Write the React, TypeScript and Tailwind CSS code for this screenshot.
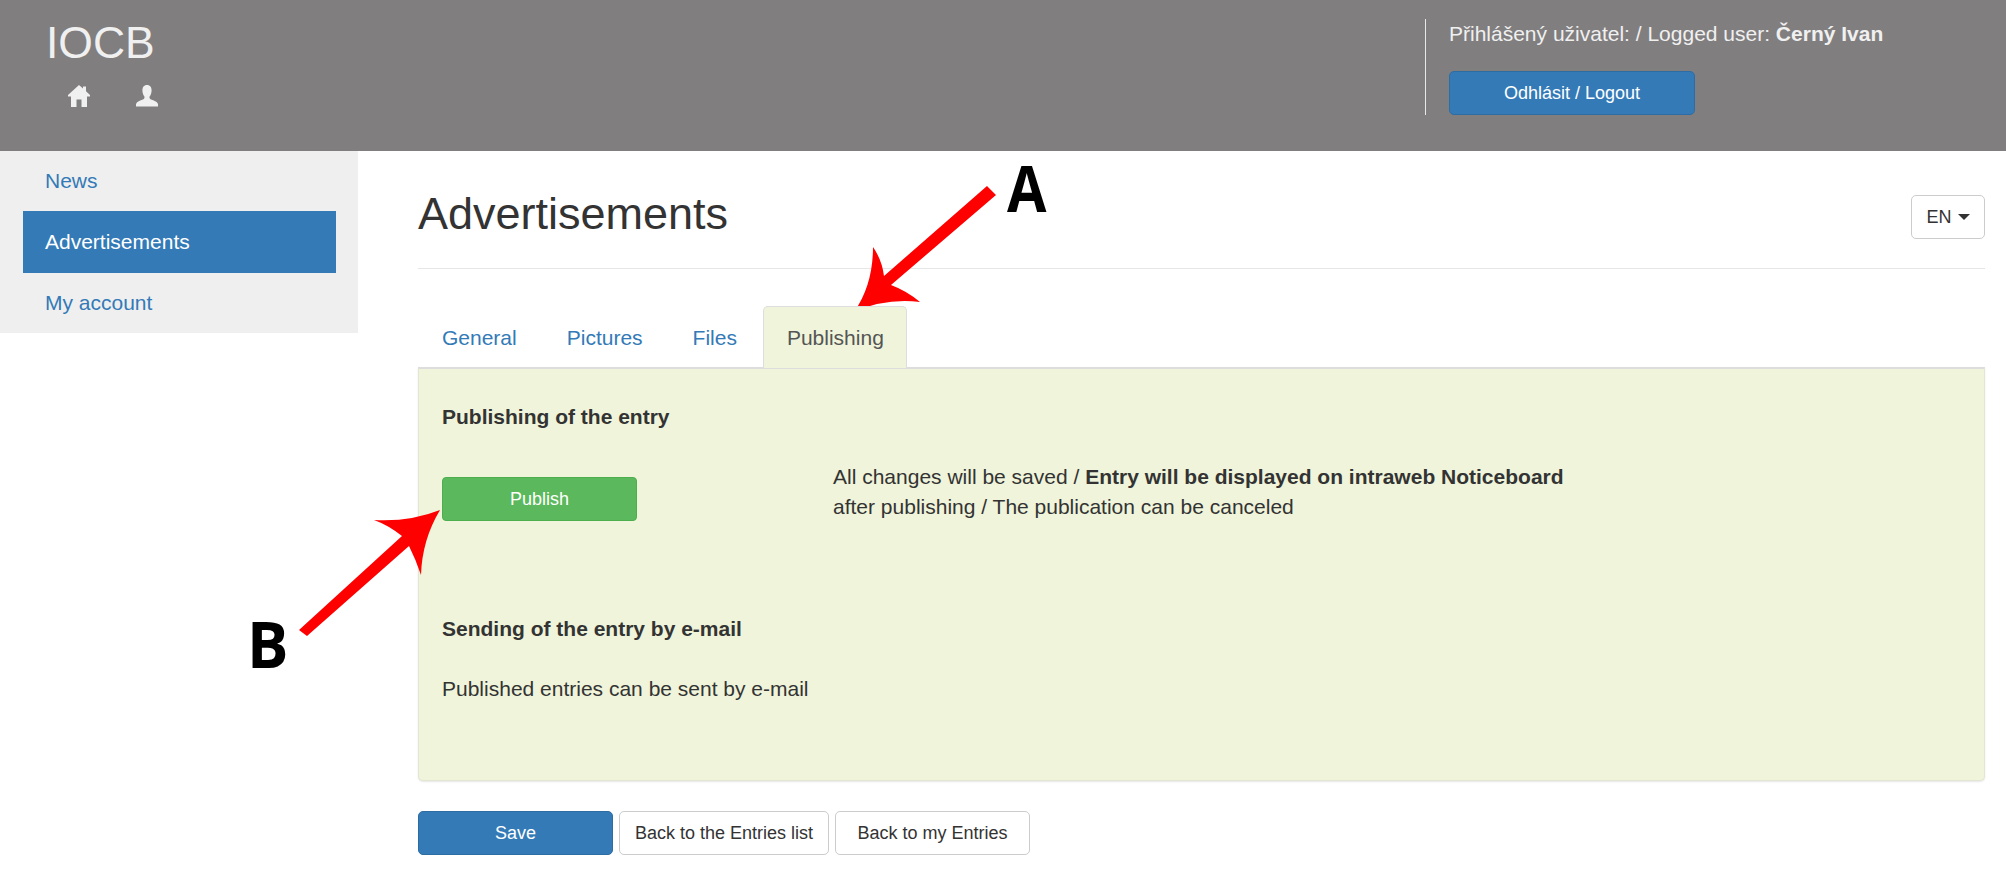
const navItems = ['News', 'Advertisements', 'My account'];
const tabs = ['General', 'Pictures', 'Files'];

function HomeGlyph() {
  return (
    <svg viewBox="0 0 22 22" className="w-[22px] h-[22px] fill-[#f0f0f0]">
      <path d="M11 0 L15 3.6 V1.5 H18 V6.3 L22 10 V11.5 H19 V22 H13.5 V14.5 H8.5 V22 H3 V11.5 H0 V10 Z" />
    </svg>
  );
}

function UserGlyph() {
  return (
    <svg viewBox="0 0 22 22" className="w-[22px] h-[22px] fill-[#f0f0f0]">
      <path d="M11 0 C14.2 0 15.6 2.4 15.6 5.2 C15.6 8 14.6 10.4 13.6 11.6 C13.2 13 13.8 14 15 14.6 C18 15.8 21 16.6 22 19 V21.5 H0 V19 C1 16.6 4 15.8 7 14.6 C8.2 14 8.8 13 8.4 11.6 C7.4 10.4 6.4 8 6.4 5.2 C6.4 2.4 7.8 0 11 0 Z" />
    </svg>
  );
}

function Annotations() {
  return (
    <>
      <svg className="absolute left-0 top-0 w-[2006px] h-[870px] pointer-events-none" viewBox="0 0 2006 870">
        <path
          fill="#fe0000"
          d="M987 186 L884 276 Q882 260 873 247 Q873 285 854 312 Q885 298 920 302 Q907 291 891 285 L996 195 Z"
        />
        <path
          fill="#fe0000"
          d="M299 630 L402 536 Q388 525 374 520 Q410 522 440 510 Q422 540 421 575 Q416 560 409 546 L307 636 Z"
        />
      </svg>
      <span className="absolute left-[1007px] top-[145px] origin-left scale-x-[0.88] text-[65px] leading-[84px] font-bold text-black font-['Open_Sans',sans-serif]">A</span>
      <span className="absolute left-[247px] top-[601px] origin-left scale-x-[0.95] text-[65px] leading-[84px] font-bold text-black font-['Open_Sans',sans-serif]">B</span>
    </>
  );
}

export default function App() {
  return (
    <div className="relative w-[2006px] h-[870px] overflow-hidden bg-white text-[#333] text-[21px] font-['Liberation_Sans',Arial,sans-serif]">
      {/* Top bar */}
      <header className="flex justify-between h-[151px] bg-[#807e7f] text-[#f0f0f0]">
        <div className="pl-[46px] pt-[18px]">
          <div className="text-[44.5px] leading-[50px]">IOCB</div>
          <div className="flex gap-[46px] pl-[22px] pt-[17px]">
            <HomeGlyph />
            <UserGlyph />
          </div>
        </div>
        <div className="w-[581px] mt-[19px] mb-[36px] border-l border-[#e8e8e8] pl-[23px]">
          <div className="leading-[30px]">
            Přihlášený uživatel: / Logged user: <b>Černý Ivan</b>
          </div>
          <button className="mt-[22px] w-[246px] h-[44px] rounded-[5px] bg-[#337ab7] border border-[#2e6da4] text-white text-[18px]">
            Odhlásit / Logout
          </button>
        </div>
      </header>

      <div className="flex items-start">
        {/* Sidebar */}
        <nav className="w-[358px] h-[182px] shrink-0 bg-[#efefef] pt-[60px] relative">
          <a className="absolute left-[45px] top-[15px] leading-[30px] text-[#337ab7]">{navItems[0]}</a>
          <a className="block ml-[23px] mr-[22px] h-[62px] pl-[22px] leading-[61px] bg-[#337ab7] text-white">{navItems[1]}</a>
          <a className="block pl-[45px] pt-[15px] leading-[30px] text-[#337ab7]">{navItems[2]}</a>
        </nav>

        {/* Main column */}
        <main className="ml-[60px] w-[1567px]">
          <div className="flex justify-between h-[118px] border-b border-[#e6e6e6]">
            <h1 className="mt-[35px] text-[45px] leading-[56px] text-[#333]">Advertisements</h1>
            <button className="mt-[44px] w-[74px] h-[44px] flex items-center justify-center gap-[6px] rounded-[5px] bg-white border border-[#ccc] text-[18px]">
              EN
              <span className="w-0 h-0 border-x-[6px] border-x-transparent border-t-[6px] border-t-[#333]" />
            </button>
          </div>

          {/* Tabs */}
          <div className="flex h-[98px] items-end pt-[37px]">
            {tabs.map((t) => (
              <a key={t} className="h-[61px] px-[23px] mr-[2px] border border-transparent leading-[62px] text-[#337ab7]">
                {t}
              </a>
            ))}
            <a className="relative z-10 h-[62px] -mb-px pl-[23px] pr-[22px] rounded-t-[5px] bg-[#eff4da] border border-b-0 border-[#ddd] leading-[62px] text-[#555]">
              Publishing
            </a>
          </div>

          {/* Panel */}
          <section className="h-[414px] rounded-b-[5px] bg-[#eff4da] border border-[#e3e6d2] border-t-2 border-t-[#ddd] shadow-[0_1px_2px_rgba(0,0,0,0.1)] px-[23px] pt-[33px]">
            <h3 className="font-bold leading-[30px]">Publishing of the entry</h3>
            <div className="flex mt-[45px]">
              <button className="w-[195px] h-[44px] rounded-[4px] bg-[#5cb85c] border border-[#4cae4c] text-white text-[18px]">
                Publish
              </button>
              <p className="ml-[196px] -mt-[15px] leading-[30px] w-[800px]">
                All changes will be saved / <b>Entry will be displayed on intraweb Noticeboard</b>
                <br />
                after publishing / The publication can be canceled
              </p>
            </div>
            <h3 className="mt-[92px] font-bold leading-[30px]">Sending of the entry by e-mail</h3>
            <p className="mt-[30px] leading-[30px]">Published entries can be sent by e-mail</p>
          </section>

          {/* Footer actions */}
          <div className="flex gap-[6px] mt-[30px]">
            <button className="w-[195px] h-[44px] rounded-[5px] bg-[#337ab7] border border-[#2e6da4] text-white text-[18px]">Save</button>
            <button className="w-[210px] h-[44px] rounded-[5px] bg-white border border-[#ccc] text-[18px]">Back to the Entries list</button>
            <button className="w-[195px] h-[44px] rounded-[5px] bg-white border border-[#ccc] text-[18px]">Back to my Entries</button>
          </div>
        </main>
      </div>

      <Annotations />
    </div>
  );
}
